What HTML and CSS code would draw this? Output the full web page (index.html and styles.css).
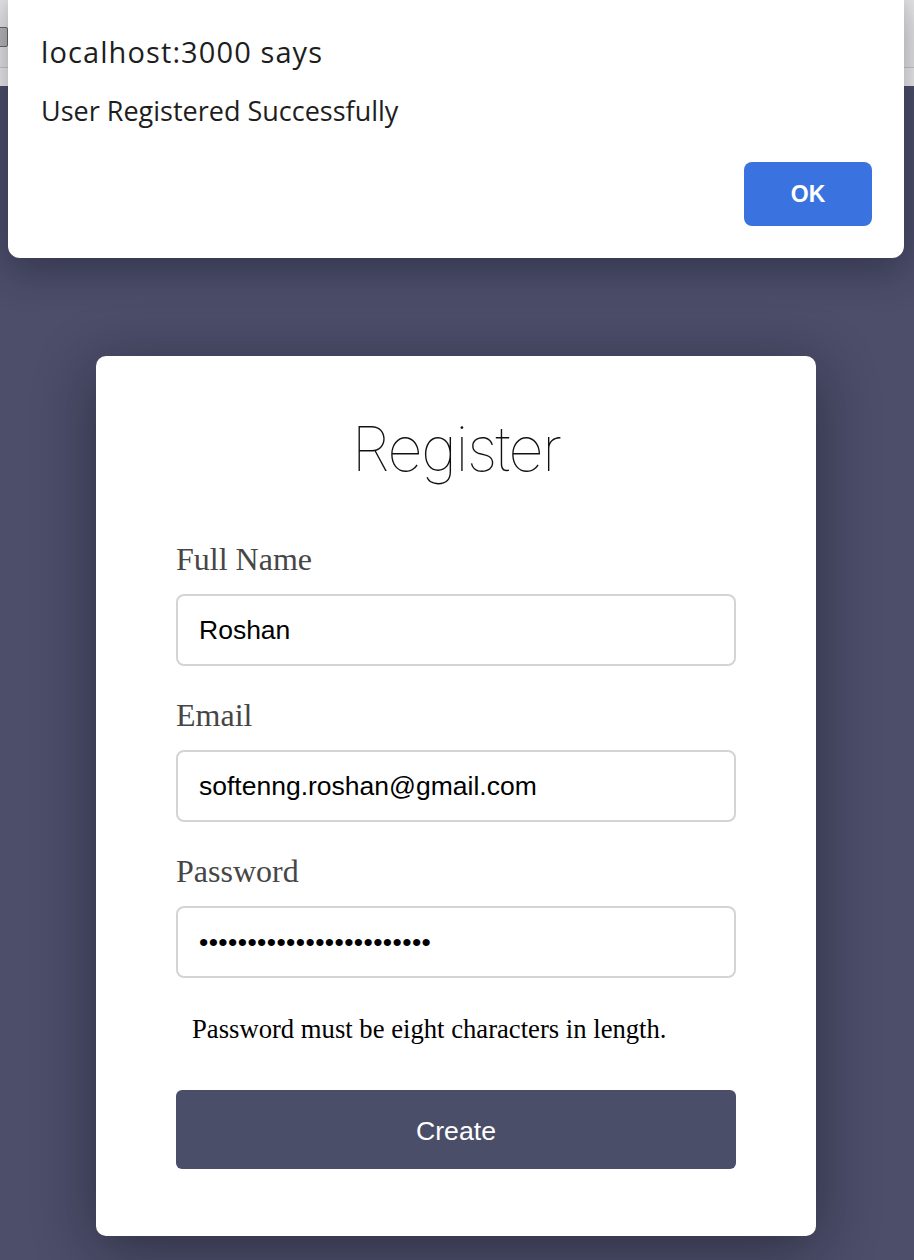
FILE: index.html
```html
<!DOCTYPE html>
<html lang="en">
<head>
<meta charset="utf-8">
<title>Register</title>
<link rel="stylesheet" href="styles.css">
</head>
<body>
<header class="chrome">
  <div class="toolbar"><span class="tool-btn"></span></div>
  <div class="bookmarks"></div>
</header>

<main class="page">
  <section class="card">
    <h1 class="card-title">Register</h1>
    <form class="form">
      <div class="field">
        <label class="field-label" for="name">Full Name</label>
        <input class="field-input" id="name" type="text" value="Roshan">
      </div>
      <div class="field">
        <label class="field-label" for="email">Email</label>
        <input class="field-input" id="email" type="text" value="softenng.roshan@gmail.com">
      </div>
      <div class="field field-last">
        <label class="field-label" for="password">Password</label>
        <input class="field-input field-password" id="password" type="password" value="abcdefghijklmnopqrstuvwx">
      </div>
      <p class="hint">Password must be eight characters in length.</p>
      <button class="create-btn" type="button">Create</button>
    </form>
  </section>
</main>

<div class="alert" role="alertdialog">
  <div class="alert-title">localhost:3000 says</div>
  <div class="alert-message">User Registered Successfully</div>
  <div class="alert-actions">
    <button class="alert-ok" type="button">OK</button>
  </div>
</div>
</body>
</html>
```

FILE: styles.css
```css
html, body {
  margin: 0;
  padding: 0;
}

body {
  background: #4c4e6a;
  min-height: 1260px;
  font-family: "Liberation Sans", Arial, sans-serif;
  overflow: hidden;
}

/* browser chrome behind the dialog */
.chrome {
  height: 86px;
  background: #f7f7f7;
}

.toolbar {
  height: 68px;
  background: #ededed;
  border-bottom: 1px solid #cfcfcf;
  box-sizing: border-box;
  position: relative;
}

.tool-btn {
  position: absolute;
  left: -14px;
  top: 27px;
  width: 20px;
  height: 18px;
  border: 1px solid #6c6c6c;
  border-radius: 2px;
  background: #bdbdbd;
}

.bookmarks {
  height: 18px;
  background: #f5f5f5;
}

/* page */
.page {
  display: flex;
  justify-content: center;
  padding: 270px 2px 0 0;
}

.card {
  width: 720px;
  box-sizing: border-box;
  padding: 56px 80px 67px;
  background: #ffffff;
  border-radius: 10px;
  box-shadow: 0 12px 60px rgba(10, 10, 20, 0.45);
}

.card-title {
  margin: 0 0 53px;
  text-align: center;
  font-family: "Inter", "Roboto", sans-serif;
  font-weight: 100;
  font-size: 62px;
  line-height: 74px;
  color: #111;
  letter-spacing: -1.8px;
}

.form {
  display: flex;
  flex-direction: column;
}

.field {
  display: flex;
  flex-direction: column;
  margin-bottom: 29px;
}

.field-last {
  margin-bottom: 0;
}

.field-label {
  font-family: "Liberation Serif", "Times New Roman", serif;
  font-size: 32px;
  line-height: 40px;
  color: #464646;
  margin-bottom: 15px;
}

.field-input {
  height: 72px;
  box-sizing: border-box;
  width: 100%;
  border: 2px solid #d4d3d7;
  border-radius: 8px;
  padding: 0 21px;
  font-family: "Liberation Sans", Arial, sans-serif;
  font-size: 26.5px;
  color: #000;
  background: #fff;
  outline: none;
}

.field-password {
  letter-spacing: 0.4px;
}

.hint {
  margin: 35px 0 45px 16px;
  font-family: "Liberation Serif", "Times New Roman", serif;
  font-size: 26.67px;
  line-height: 32px;
  color: #000;
}

.create-btn {
  height: 79px;
  width: 100%;
  border: none;
  border-radius: 6px;
  background: #4b4e68;
  color: #ffffff;
  font-family: "Liberation Sans", Arial, sans-serif;
  font-size: 26.67px;
  padding-top: 4px;
  cursor: pointer;
}

/* alert dialog overlay */
.alert {
  position: absolute;
  left: 8px;
  top: -12px;
  width: 896px;
  height: 270px;
  box-sizing: border-box;
  padding: 47px 32px 32px 33px;
  background: #ffffff;
  border-radius: 12px;
  box-shadow: 0 10px 40px rgba(20, 20, 35, 0.45);
  display: flex;
  flex-direction: column;
  color: #1e1e1e;
}

.alert-title {
  font-family: "Open Sans", sans-serif;
  font-size: 29px;
  line-height: 34px;
  letter-spacing: 1.1px;
}

.alert-message {
  margin-top: 25px;
  font-family: "Open Sans", sans-serif;
  font-size: 27px;
  line-height: 34px;
}

.alert-actions {
  margin-top: auto;
  display: flex;
  justify-content: flex-end;
}

.alert-ok {
  width: 128px;
  height: 64px;
  border: none;
  border-radius: 8px;
  background: #3a73e0;
  color: #ffffff;
  font-family: "Liberation Sans", Arial, sans-serif;
  font-weight: bold;
  font-size: 23px;
}
```
